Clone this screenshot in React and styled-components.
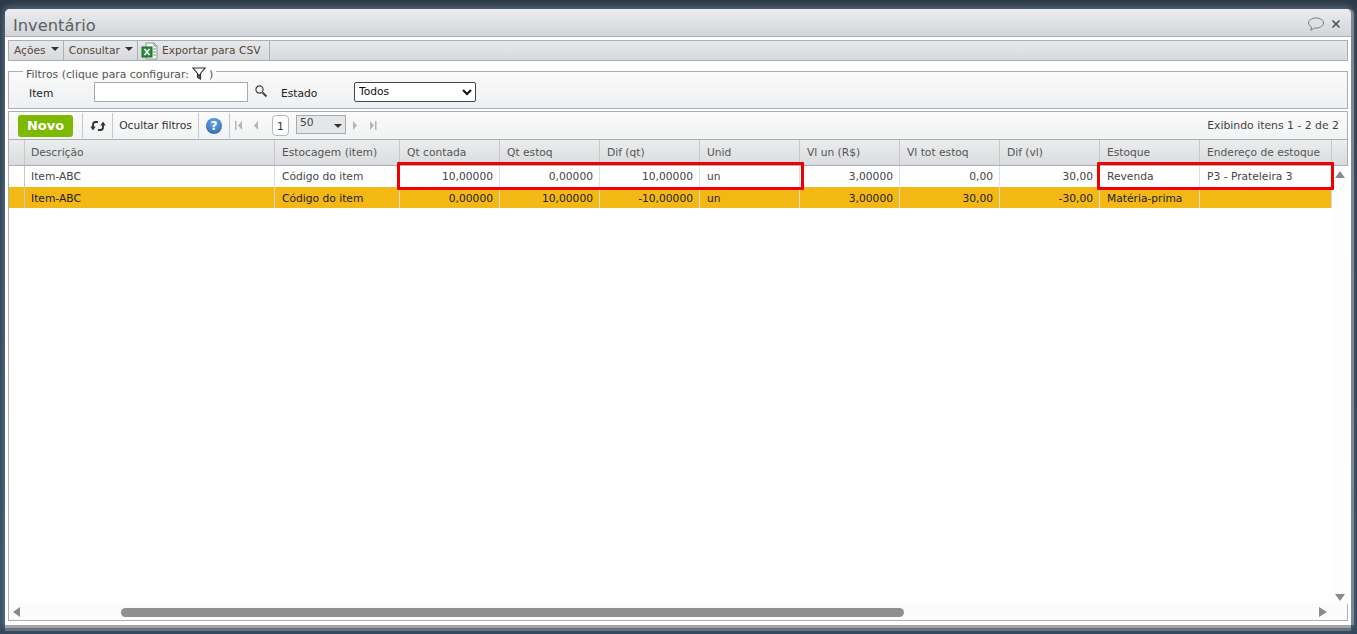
import React from 'react';
import styled, { createGlobalStyle } from 'styled-components';
import { X } from 'lucide-react';

const GlobalStyle = createGlobalStyle`
	html, body { margin: 0; padding: 0; height: 100%; overflow: hidden; }
	body {
		background: linear-gradient(#2e3a47, #33495f);
		font-family: 'DejaVu Sans', Verdana, sans-serif;
		font-size: 10.7px;
	}
`;

const columns = [
	{ title: 'Descrição', width: 250, pad: 6 },
	{ title: 'Estocagem (item)', width: 125 },
	{ title: 'Qt contada', width: 100, right: true },
	{ title: 'Qt estoq', width: 100, right: true },
	{ title: 'Dif (qt)', width: 100, right: true },
	{ title: 'Unid', width: 100 },
	{ title: 'Vl un (R$)', width: 100, right: true },
	{ title: 'Vl tot estoq', width: 100, right: true },
	{ title: 'Dif (vl)', width: 100, right: true },
	{ title: 'Estoque', width: 100 },
	{ title: 'Endereço de estoque', width: 132 },
];

const rows = [
	['Item-ABC', 'Código do item', '10,00000', '0,00000', '10,00000', 'un', '3,00000', '0,00', '30,00', 'Revenda', 'P3 - Prateleira 3'],
	['Item-ABC', 'Código do item', '0,00000', '10,00000', '-10,00000', 'un', '3,00000', '30,00', '-30,00', 'Matéria-prima', ''],
];

export default function App() {
	return (
		<>
			<GlobalStyle />
			<Page>
				<Win>
					<TitleBar>
						<Title>Inventário</Title>
						<TitleIcons>
							<svg width="18" height="15" viewBox="0 0 18 15" fill="none">
								<path d="M9 1C4.8 1 1.5 3.2 1.5 6c0 1.7 1.2 3.1 3 4l-.8 3.4L7.6 11c.5.1.9.1 1.4.1 4.2 0 7.5-2.3 7.5-5.1S13.200 1 9 1z" stroke="#7b7f84" strokeWidth="1" />
							</svg>
							<X size={12} strokeWidth={3.5} color="#555" />
						</TitleIcons>
					</TitleBar>

					<MenuBar>
						<MenuItem>Ações <Caret /></MenuItem>
						<MenuItem>Consultar <Caret /></MenuItem>
						<MenuItem $icon>
							<svg width="18" height="18" viewBox="0 0 18 18">
								<path d="M5 1h8l3 3v13H5z" fill="#f4f6f4" stroke="#8c9a90" />
								<path d="M13 1v3h3" fill="none" stroke="#8c9a90" />
								<rect x="1" y="5" width="10" height="10" fill="#2e8b3c" stroke="#1c6b2b" />
								<path d="M3.500 7l5 6M8.500 7l-5 6" stroke="#fff" strokeWidth="1.400" />
								<path d="M12 7h3M12 10h3M12 13h3" stroke="#6fae7b" />
							</svg>
							Exportar para CSV
						</MenuItem>
					</MenuBar>

					<Filters>
						<FilterLegend>
							Filtros (clique para configurar:
							<FunnelIcon width="14" height="13" viewBox="0 0 14 13" fill="none">
								<path d="M1 1h12L8.500 6.500V12l-3-1.500v-4z" stroke="#333" strokeWidth="1.100" fill="#fff" />
								<path d="M6 7h2v4H6z" fill="#555" />
							</FunnelIcon>
							)
						</FilterLegend>
						<FilterLabel $width={65}>Item</FilterLabel>
						<SearchInput />
						<SearchIcon width="14" height="14" viewBox="0 0 14 14" fill="none">
							<circle cx="5.500" cy="5.500" r="3.600" stroke="#444" strokeWidth="1.200" />
							<path d="M8.500 8.500l4 4" stroke="#444" strokeWidth="2" />
						</SearchIcon>
						<FilterLabel $width={73}>Estado</FilterLabel>
						<StateSelect defaultValue="Todos">
							<option>Todos</option>
						</StateSelect>
					</Filters>

					<GridPanel>
						<Pager>
							<NewButton>Novo</NewButton>
							<PagerSep />
							<RefreshCell>
								<svg width="16" height="12" viewBox="0 0 16 12" fill="none">
									<path d="M8 2H5.500C3.500 2 3 3.500 3 5v3" stroke="#333" strokeWidth="1.900" />
									<path d="M0.300 6.500h5.400L3 10.500z" fill="#333" />
									<path d="M8 10h2.500c2 0 2.500-1.500 2.500-3V4" stroke="#333" strokeWidth="1.900" />
									<path d="M10.300 5.500h5.400L13 1.500z" fill="#333" />
								</svg>
							</RefreshCell>
							<PagerSep />
							<HideFilters>Ocultar filtros</HideFilters>
							<PagerSep />
							<HelpBall>?</HelpBall>
							<PagerSep />
							<NavIcon viewBox="0 0 8 9"><path d="M0 0h1.500v9H0zM7 0v9L3 4.500z" /></NavIcon>
							<NavIcon $gap={9} viewBox="0 0 8 9"><path d="M6 0v9L2 4.500z" /></NavIcon>
							<PageNumber>1</PageNumber>
							<PageSize>50<SizeCaret /></PageSize>
							<NavIcon $gap={5} viewBox="0 0 8 9"><path d="M2 0v9l4-4.500z" /></NavIcon>
							<NavIcon $gap={10} viewBox="0 0 8 9"><path d="M1 0v9l4-4.500zM6 0h1.500v9H6z" /></NavIcon>
							<Showing>Exibindo itens 1 - 2 de 2</Showing>
						</Pager>

						<HeaderRow>
							<Gutter />
							{columns.map(col => (
								<HeaderCell key={col.title} $width={col.width} $pad={col.pad}>{col.title}</HeaderCell>
							))}
							<HeaderFill />
						</HeaderRow>

						<Body>
							<Table>
								{rows.map((row, r) => (
									<Row key={r} $alt={r === 1}>
										<Gutter />
										{row.map((value, c) => (
											<Cell key={c} $width={columns[c].width} $pad={columns[c].pad} $right={columns[c].right} $alt={r === 1}>
												{value}
											</Cell>
										))}
									</Row>
								))}
							</Table>
							<VScroll>
								<ArrowUp />
								<ArrowDown />
							</VScroll>
							<Highlight $left={388} $width={407} />
							<Highlight $left={1088} $width={237} />
						</Body>

						<HScroll>
							<ArrowLeft />
							<Thumb />
							<ArrowRight />
						</HScroll>
					</GridPanel>
				</Win>
			</Page>
		</>
	);
}

const Page = styled.div`
	height: 634px;
	padding: 9px 6px 9px 5px;
	box-sizing: border-box;
`;

const Win = styled.div`
	height: 100%;
	background: #fff;
	border-radius: 5px 5px 0 0;
	display: flex;
	flex-direction: column;
	padding: 0 3px 4px 3px;
	box-sizing: border-box;
	box-shadow: 0 3px 0 #a3a5a7, 0 6px 0 #6e7276, 3px 0 0 #7b8793, 0 0 6px 2px rgba(120, 145, 180, 0.55);
`;

const TitleBar = styled.div`
	height: 28px;
	margin: 0 -3px 3px -3px;
	padding: 0 9px 0 8px;
	box-sizing: border-box;
	background: linear-gradient(#ebecee, #d3d5d9);
	border-bottom: 1px solid #a6adb5;
	border-radius: 5px 5px 0 0;
	display: flex;
	align-items: center;
	justify-content: space-between;
	flex: none;
`;

const Title = styled.div`
	font-size: 16.3px;
	color: #5c6066;
	padding-top: 5px;
`;

const TitleIcons = styled.div`
	display: flex;
	align-items: center;
	gap: 5px;
	margin-top: 3px;
`;

const MenuBar = styled.div`
	height: 19px;
	flex: none;
	display: flex;
	border: 1px solid #a8afb7;
	background: linear-gradient(#e7e8eb, #d7d9dd);
	margin-bottom: 10px;
`;

const MenuItem = styled.div`
	display: flex;
	align-items: center;
	gap: ${p => (p.$icon ? 3 : 5)}px;
	padding: 0 ${p => (p.$icon ? 9 : 4)}px 0 ${p => (p.$icon ? 3 : 5)}px;
	border-right: 1px solid #a8afb7;
	color: #5b4636;
	white-space: nowrap;
`;

const Caret = styled.span`
	width: 0;
	height: 0;
	margin-top: -3px;
	border-left: 4px solid transparent;
	border-right: 4px solid transparent;
	border-top: 4px solid #333;
`;

const Filters = styled.div`
	position: relative;
	height: 38px;
	flex: none;
	display: flex;
	align-items: center;
	padding: 3px 0 0 20px;
	box-sizing: border-box;
	border: 1px solid #a8afb7;
	background: linear-gradient(#fafafa, #eff0f2);
	margin-bottom: 2px;
`;

const FilterLegend = styled.div`
	position: absolute;
	left: 14px;
	top: -4px;
	padding: 0 3px;
	display: flex;
	align-items: center;
	gap: 3px;
	height: 13px;
	background: linear-gradient(transparent 3px, #fafafa 3px);
	color: #555;
	font-size: 10.85px;
	white-space: nowrap;
`;

const FunnelIcon = styled.svg`
	margin-top: -2px;
`;

const FilterLabel = styled.label`
	width: ${p => p.$width}px;
	color: #222;
	padding-top: 4px;
`;

const SearchInput = styled.input`
	width: 154px;
	height: 20px;
	box-sizing: border-box;
	border: 1px solid #a9a9a9;
	background: #fff;
	margin-right: 6px;
`;

const SearchIcon = styled.svg`
	margin: 0 13px 2px 0;
`;

const StateSelect = styled.select`
	width: 122px;
	height: 20px;
	font-family: 'DejaVu Sans', sans-serif;
	font-size: 10.7px;
	background: #fff;
	border: 1px solid #444;
	border-radius: 2px;
	color: #111;
`;

const GridPanel = styled.div`
	flex: 1;
	min-height: 0;
	display: flex;
	flex-direction: column;
	border: 1px solid #a8afb7;
`;

const Pager = styled.div`
	height: 28px;
	flex: none;
	display: flex;
	align-items: center;
	box-sizing: border-box;
	padding-left: 9px;
	background: linear-gradient(#fbfbfb, #f1f2f3);
	border-bottom: 1px solid #a8afb7;
`;

const NewButton = styled.div`
	width: 55px;
	height: 22px;
	background: #7fb800;
	border-radius: 3px;
	color: #fff;
	font-family: 'DejaVu Sans', sans-serif;
	font-weight: bold;
	font-size: 13px;
	line-height: 22px;
	text-align: center;
	margin-right: 9px;
`;

const PagerSep = styled.div`
	width: 1px;
	height: 25px;
	background: #c4c8cc;
`;

const RefreshCell = styled.div`
	width: 29px;
	display: flex;
	justify-content: center;
`;

const HideFilters = styled.div`
	width: 85px;
	text-align: center;
	color: #333;
	white-space: nowrap;
`;

const HelpBall = styled.div`
	width: 16px;
	height: 16px;
	margin: 0 7px;
	border-radius: 50%;
	background: radial-gradient(circle at 50% 30%, #6ea6e6, #2061b5);
	color: #fff;
	font-weight: bold;
	font-size: 12px;
	line-height: 16px;
	text-align: center;
`;

const NavIcon = styled.svg`
	width: 8px;
	height: 9px;
	margin-left: ${p => p.$gap || 5}px;
	fill: #b2b6ba;
`;

const PageNumber = styled.div`
	width: 17px;
	height: 21px;
	box-sizing: border-box;
	margin-left: 12px;
	border: 1px solid #b5b9bd;
	border-radius: 4px;
	background: #fff;
	color: #333;
	text-align: center;
	line-height: 21px;
`;

const PageSize = styled.div`
	position: relative;
	width: 50px;
	height: 19px;
	margin: 0 0 2px 7px;
	padding-left: 3px;
	box-sizing: border-box;
	border: 1px solid #a6abb0;
	background: #e5e6e8;
	color: #444;
	line-height: 14px;
`;

const SizeCaret = styled.span`
	position: absolute;
	right: 3px;
	top: 8px;
	border-left: 4px solid transparent;
	border-right: 4px solid transparent;
	border-top: 4px solid #333;
`;

const Showing = styled.div`
	margin-left: auto;
	padding-right: 8px;
	font-size: 10.85px;
	color: #444;
	white-space: nowrap;
`;

const HeaderRow = styled.div`
	height: 26px;
	flex: none;
	display: flex;
	box-sizing: border-box;
	background: linear-gradient(#eceded, #d9dbde);
	border-bottom: 1px solid #a8afb7;
`;

const Gutter = styled.div`
	width: 16px;
	flex: none;
	box-sizing: border-box;
	border-right: 1px solid #c4c9cf;
`;

const HeaderCell = styled.div`
	width: ${p => p.$width}px;
	flex: none;
	box-sizing: border-box;
	padding-left: ${p => p.$pad || 7}px;
	line-height: 25px;
	color: #555;
	border-right: 1px solid #c4c9cf;
	white-space: nowrap;
	overflow: hidden;
`;

const HeaderFill = styled.div`
	flex: 1;
`;

const Body = styled.div`
	position: relative;
	flex: 1;
	min-height: 0;
	display: flex;
`;

const Table = styled.div`
	flex: 1;
`;

const Row = styled.div`
	height: 21px;
	display: flex;
	background: ${p => (p.$alt ? '#f4b815' : '#fff')};
	width: 1323px;
	color: ${p => (p.$alt ? '#222' : '#444')};
`;

const Cell = styled.div`
	width: ${p => p.$width}px;
	flex: none;
	box-sizing: border-box;
	padding: 0 6px 0 ${p => p.$pad || 7}px;
	line-height: ${p => (p.$alt ? 23 : 21)}px;
	text-align: ${p => (p.$right ? 'right' : 'left')};
	border-right: 1px solid ${p => (p.$alt ? '#e3dcc8' : '#dde0e4')};
	white-space: nowrap;
	overflow: hidden;
`;

const VScroll = styled.div`
	width: 16px;
	flex: none;
	position: relative;
	background: #fdfdfd;
`;

const ArrowUp = styled.div`
	position: absolute;
	left: 3px;
	top: 5px;
	border-left: 5px solid transparent;
	border-right: 5px solid transparent;
	border-bottom: 7px solid #8a8a8a;
`;

const ArrowDown = styled.div`
	position: absolute;
	left: 3px;
	bottom: 3px;
	border-left: 5px solid transparent;
	border-right: 5px solid transparent;
	border-top: 7px solid #8a8a8a;
`;

const Highlight = styled.div`
	position: absolute;
	left: ${p => p.$left}px;
	top: -4px;
	width: ${p => p.$width}px;
	height: 28px;
	box-sizing: border-box;
	border: 3px solid #f00000;
	border-radius: 1px;
`;

const HScroll = styled.div`
	height: 16px;
	flex: none;
	position: relative;
	display: flex;
	align-items: center;
	background: #fbfbfb;
`;

const ArrowLeft = styled.div`
	margin-left: 4px;
	border-top: 5px solid transparent;
	border-bottom: 5px solid transparent;
	border-right: 7px solid #8a8a8a;
`;

const Thumb = styled.div`
	width: 783px;
	height: 9px;
	margin-left: 101px;
	background: #8f8f8f;
	border-radius: 5px;
`;

const ArrowRight = styled.div`
	margin-left: auto;
	margin-right: 20px;
	border-top: 5px solid transparent;
	border-bottom: 5px solid transparent;
	border-left: 8px solid #8a8a8a;
`;
